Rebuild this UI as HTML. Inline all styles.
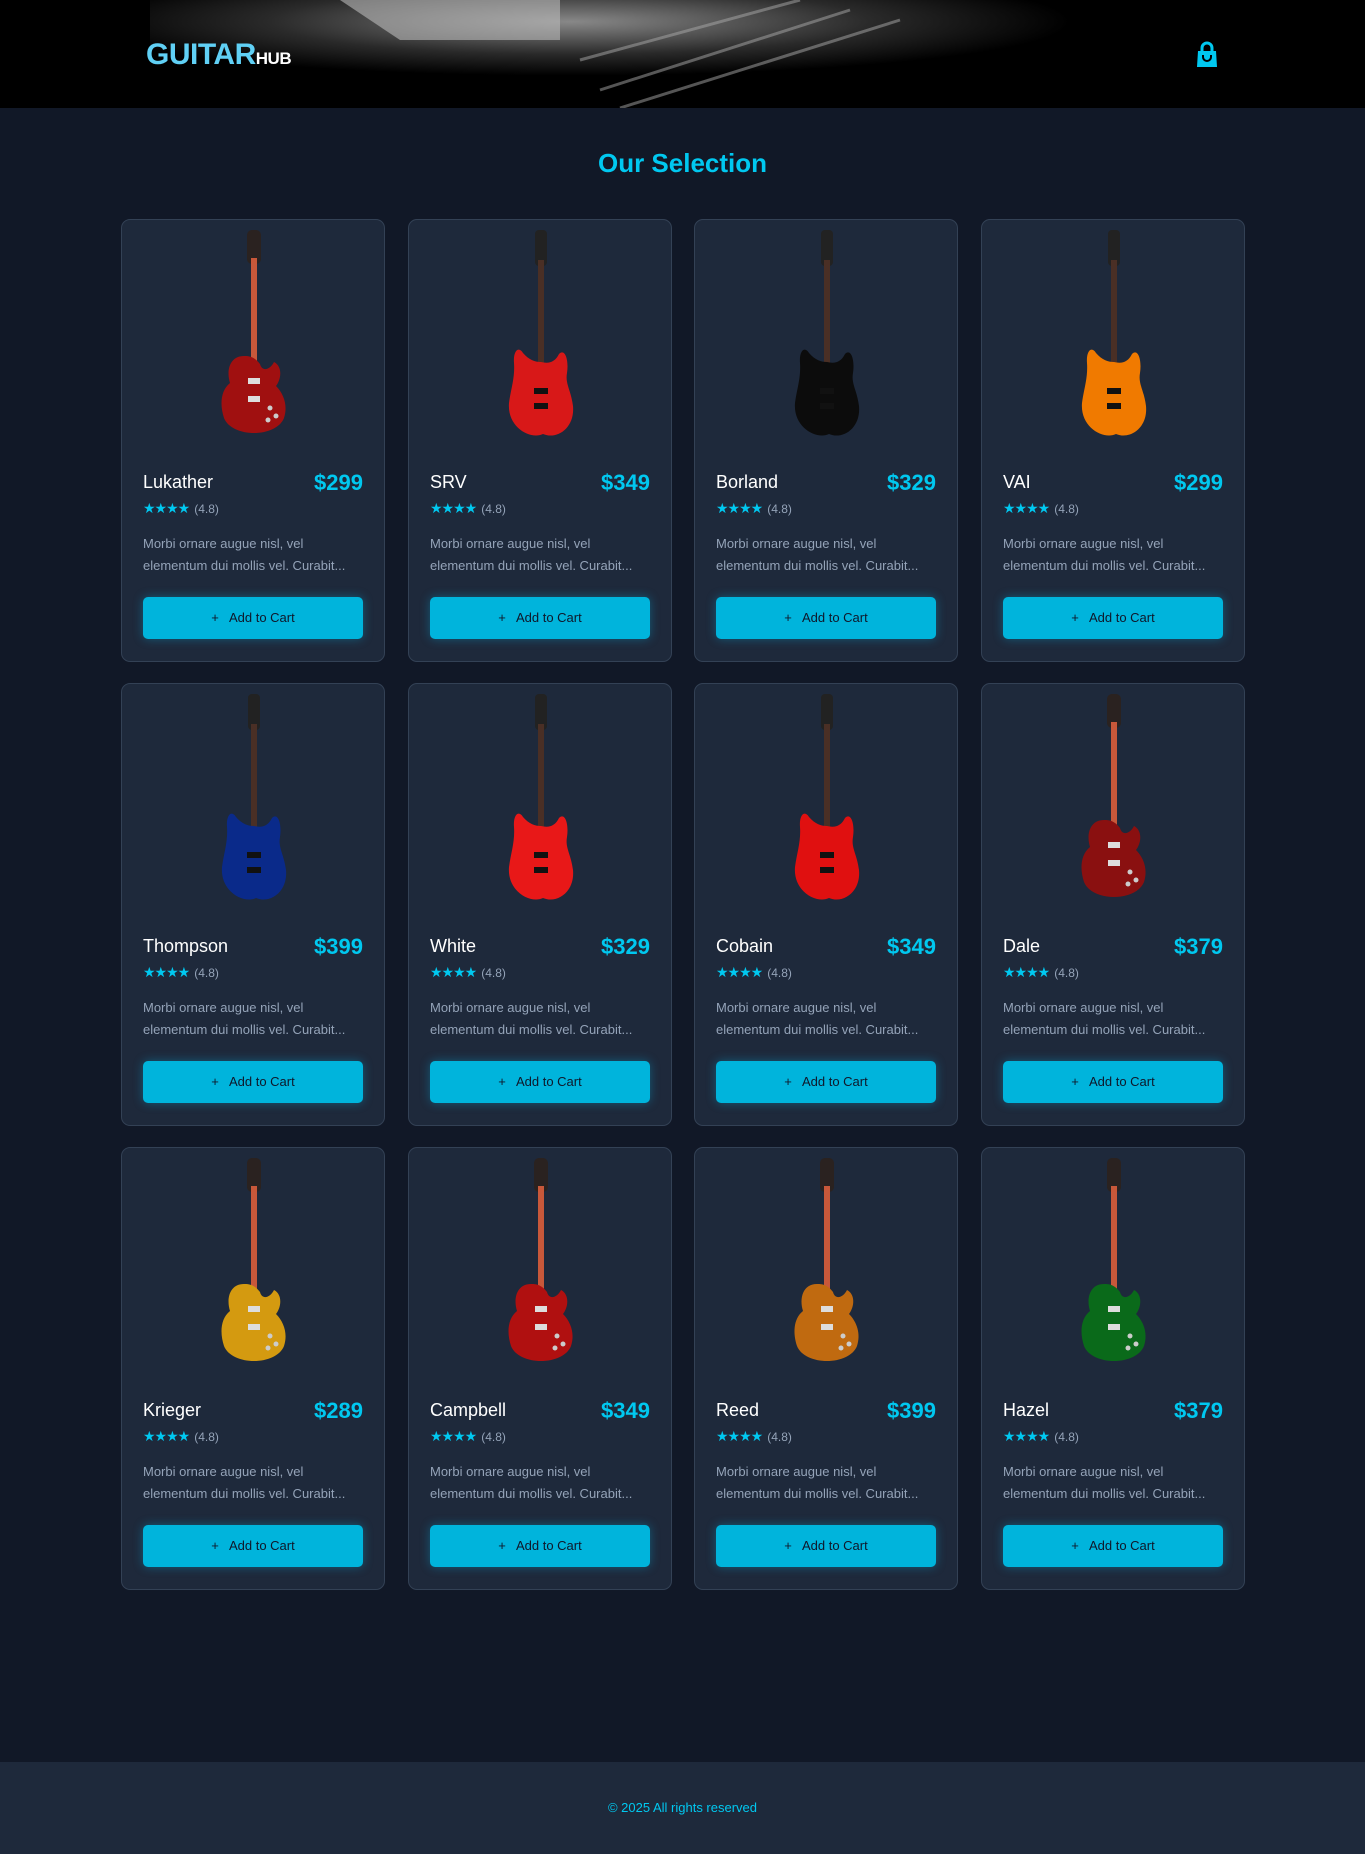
<!DOCTYPE html>
<html><head><meta charset="utf-8">
<style>
*{box-sizing:border-box;margin:0;padding:0}
body{width:1365px;height:1854px;background:#111827;font-family:"Liberation Sans",sans-serif;position:relative;overflow:hidden}
header{position:absolute;left:0;top:0;width:1365px;height:108px;background:#000;overflow:hidden}
.logo{position:absolute;left:146px;top:38px;color:#60d0f5;font-weight:bold;font-size:30px;letter-spacing:-0.5px}
.logo span{color:#fff;font-size:17px}
h1{position:absolute;top:148px;width:100%;text-align:center;color:#00c8f0;font-size:26px;font-weight:bold}
.card{position:absolute;width:264px;height:443px;background:#1e293b;border:1px solid #334155;border-radius:9px}
.card svg.g{position:absolute;left:92px;top:8px}
.name{position:absolute;left:21px;top:252px;color:#fff;font-size:18px}
.price{position:absolute;right:21px;top:250px;color:#00c8f0;font-size:22px;font-weight:bold}
.stars{position:absolute;left:21px;top:280px;color:#00c8f0;font-size:14px;letter-spacing:-1px}
.stars span{color:#94a3b8;font-size:12px;letter-spacing:0;margin-left:5px}
.desc{position:absolute;left:21px;top:313px;width:225px;color:#94a3b8;font-size:13px;line-height:22px}
.btn{position:absolute;left:21px;top:377px;width:220px;height:42px;background:#00b4dc;border-radius:5px;color:#0f172a;font-size:13px;text-align:center;line-height:42px;box-shadow:0 0 10px rgba(0,190,240,.35)}
footer{position:absolute;left:0;top:1762px;width:1365px;height:92px;background:#1e293b;color:#00c8f0;font-size:13px;text-align:center;line-height:92px}
</style></head><body>
<svg width="0" height="0" style="position:absolute">
<defs>
<symbol id="lp" viewBox="0 0 80 210">
<rect x="33" y="2" width="14" height="34" rx="5" fill="#2a2220"/>
<rect x="37" y="30" width="6" height="110" fill="#c8583a"/>
<path d="M30 128 C16 128 12 142 16 155 C6 163 6 178 10 190 C18 210 62 210 70 190 C74 178 70 166 62 158 C68 150 68 138 60 134 C56 142 48 144 46 136 C40 128 34 128 30 128 Z" fill="currentColor"/>
<rect x="34" y="150" width="12" height="6" fill="#ddd"/><rect x="34" y="168" width="12" height="6" fill="#ddd"/>
<circle cx="56" cy="180" r="2.5" fill="#ccc"/><circle cx="62" cy="188" r="2.5" fill="#ccc"/><circle cx="54" cy="192" r="2.5" fill="#ccc"/>
</symbol>
<symbol id="st" viewBox="0 0 80 210">
<rect x="34" y="2" width="12" height="36" rx="4" fill="#222"/>
<rect x="37" y="32" width="6" height="112" fill="#4a2f25"/>
<path d="M22 125 C18 118 12 122 13 135 C14 150 10 160 8 175 C6 200 30 212 42 206 C56 212 74 200 72 178 C70 162 64 156 66 145 C68 132 64 120 58 126 C54 134 48 136 40 134 C34 134 28 132 22 125 Z" fill="currentColor"/>
<rect x="33" y="160" width="14" height="6" fill="#111"/><rect x="33" y="175" width="14" height="6" fill="#111"/>
</symbol>
</defs></svg>

<header>
<svg width="1365" height="108" style="position:absolute;left:0;top:0">
<defs><radialGradient id="hg" cx="0.42" cy="0.2" r="0.5"><stop offset="0" stop-color="#888"/><stop offset="0.6" stop-color="#2a2a2a"/><stop offset="1" stop-color="#000"/></radialGradient></defs>
<rect x="150" y="0" width="1000" height="108" fill="url(#hg)"/>
<path d="M340 0 L400 40 L560 40 L560 0 Z" fill="#bbb" opacity=".6"/>
<g stroke="#aaa" stroke-width="3" opacity=".5"><line x1="580" y1="60" x2="800" y2="0"/><line x1="600" y1="90" x2="850" y2="10"/><line x1="620" y1="108" x2="900" y2="20"/></g>
</svg>
<div class="logo">GUITAR<span>HUB</span></div>
<svg style="position:absolute;left:1196px;top:41px" width="22" height="27" viewBox="0 0 22 27"><path d="M6 10 V7 a5 5 0 0 1 10 0 V10" fill="none" stroke="#00c8f0" stroke-width="3"/><path d="M2 10 H20 L21 26 H1 Z" fill="#00c8f0"/><path d="M7 14 v2 a4 4 0 0 0 8 0 v-2" fill="none" stroke="#000" stroke-width="2"/></svg>
</header>

<h1>Our Selection</h1>

<div class="card" style="left:121px;top:219px"><svg class="g" width="80" height="210" style="color:#a01010"><use href="#lp"/></svg><div class="name">Lukather</div><div class="price">$299</div><div class="stars">★★★★<span>(4.8)</span></div><div class="desc">Morbi ornare augue nisl, vel elementum dui mollis vel. Curabit...</div><div class="btn">+&nbsp;&nbsp; Add to Cart</div></div>
<div class="card" style="left:408px;top:219px"><svg class="g" width="80" height="210" style="color:#d81818"><use href="#st"/></svg><div class="name">SRV</div><div class="price">$349</div><div class="stars">★★★★<span>(4.8)</span></div><div class="desc">Morbi ornare augue nisl, vel elementum dui mollis vel. Curabit...</div><div class="btn">+&nbsp;&nbsp; Add to Cart</div></div>
<div class="card" style="left:694px;top:219px"><svg class="g" width="80" height="210" style="color:#0c0c0c"><use href="#st"/></svg><div class="name">Borland</div><div class="price">$329</div><div class="stars">★★★★<span>(4.8)</span></div><div class="desc">Morbi ornare augue nisl, vel elementum dui mollis vel. Curabit...</div><div class="btn">+&nbsp;&nbsp; Add to Cart</div></div>
<div class="card" style="left:981px;top:219px"><svg class="g" width="80" height="210" style="color:#f07a00"><use href="#st"/></svg><div class="name">VAI</div><div class="price">$299</div><div class="stars">★★★★<span>(4.8)</span></div><div class="desc">Morbi ornare augue nisl, vel elementum dui mollis vel. Curabit...</div><div class="btn">+&nbsp;&nbsp; Add to Cart</div></div>

<div class="card" style="left:121px;top:683px"><svg class="g" width="80" height="210" style="color:#0a2a8a"><use href="#st"/></svg><div class="name">Thompson</div><div class="price">$399</div><div class="stars">★★★★<span>(4.8)</span></div><div class="desc">Morbi ornare augue nisl, vel elementum dui mollis vel. Curabit...</div><div class="btn">+&nbsp;&nbsp; Add to Cart</div></div>
<div class="card" style="left:408px;top:683px"><svg class="g" width="80" height="210" style="color:#e81818"><use href="#st"/></svg><div class="name">White</div><div class="price">$329</div><div class="stars">★★★★<span>(4.8)</span></div><div class="desc">Morbi ornare augue nisl, vel elementum dui mollis vel. Curabit...</div><div class="btn">+&nbsp;&nbsp; Add to Cart</div></div>
<div class="card" style="left:694px;top:683px"><svg class="g" width="80" height="210" style="color:#e01010"><use href="#st"/></svg><div class="name">Cobain</div><div class="price">$349</div><div class="stars">★★★★<span>(4.8)</span></div><div class="desc">Morbi ornare augue nisl, vel elementum dui mollis vel. Curabit...</div><div class="btn">+&nbsp;&nbsp; Add to Cart</div></div>
<div class="card" style="left:981px;top:683px"><svg class="g" width="80" height="210" style="color:#8a1010"><use href="#lp"/></svg><div class="name">Dale</div><div class="price">$379</div><div class="stars">★★★★<span>(4.8)</span></div><div class="desc">Morbi ornare augue nisl, vel elementum dui mollis vel. Curabit...</div><div class="btn">+&nbsp;&nbsp; Add to Cart</div></div>

<div class="card" style="left:121px;top:1147px"><svg class="g" width="80" height="210" style="color:#d49a10"><use href="#lp"/></svg><div class="name">Krieger</div><div class="price">$289</div><div class="stars">★★★★<span>(4.8)</span></div><div class="desc">Morbi ornare augue nisl, vel elementum dui mollis vel. Curabit...</div><div class="btn">+&nbsp;&nbsp; Add to Cart</div></div>
<div class="card" style="left:408px;top:1147px"><svg class="g" width="80" height="210" style="color:#b01010"><use href="#lp"/></svg><div class="name">Campbell</div><div class="price">$349</div><div class="stars">★★★★<span>(4.8)</span></div><div class="desc">Morbi ornare augue nisl, vel elementum dui mollis vel. Curabit...</div><div class="btn">+&nbsp;&nbsp; Add to Cart</div></div>
<div class="card" style="left:694px;top:1147px"><svg class="g" width="80" height="210" style="color:#c06a10"><use href="#lp"/></svg><div class="name">Reed</div><div class="price">$399</div><div class="stars">★★★★<span>(4.8)</span></div><div class="desc">Morbi ornare augue nisl, vel elementum dui mollis vel. Curabit...</div><div class="btn">+&nbsp;&nbsp; Add to Cart</div></div>
<div class="card" style="left:981px;top:1147px"><svg class="g" width="80" height="210" style="color:#0a6a1a"><use href="#lp"/></svg><div class="name">Hazel</div><div class="price">$379</div><div class="stars">★★★★<span>(4.8)</span></div><div class="desc">Morbi ornare augue nisl, vel elementum dui mollis vel. Curabit...</div><div class="btn">+&nbsp;&nbsp; Add to Cart</div></div>

<footer>© 2025 All rights reserved</footer>
</body></html>
